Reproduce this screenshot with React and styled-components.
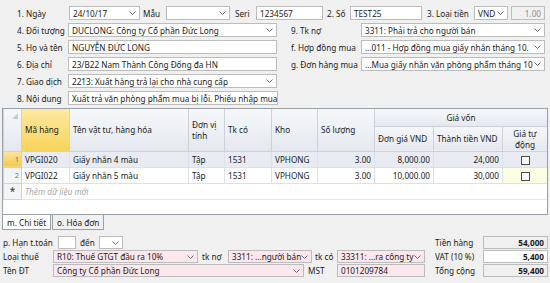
import React from 'react';
import styled, { createGlobalStyle, css } from 'styled-components';

const GlobalStyle = createGlobalStyle`
  html, body { margin: 0; padding: 0; background: #f0f0f0; }
  body {
    font-family: "Noto Sans", "Open Sans", sans-serif;
    font-size: 8.2px;
    color: #1b1b1b;
  }
  * { box-sizing: border-box; }
`;

const Page = styled.div`
  width: 550px;
  height: 283px;
  overflow: hidden;
  background: #f0f0f0;
`;

const Form = styled.div`
  display: flex;
  flex-direction: column;
  gap: 3px;
  padding: 6px 0 0 17px;
`;

const Row = styled.div`
  display: flex;
  align-items: center;
  height: ${p => p.$h || 14}px;
  white-space: nowrap;
`;

const Label = styled.span`
  width: ${p => p.$w}px;
  margin-left: ${p => p.$ml || 0}px;
  flex: none;
  overflow: hidden;
`;

const Field = styled.div`
  position: relative;
  width: ${p => p.$w}px;
  margin-left: ${p => p.$ml || 0}px;
  height: 100%;
  flex: none;
  display: flex;
  align-items: center;
  justify-content: ${p => (p.$right ? 'flex-end' : 'flex-start')};
  padding: ${p => (p.$combo ? '0 12px 0 3px' : '0 3px')};
  border: 1px solid #bcbcbc;
  background: ${p => p.$bg || '#fff'};
  color: ${p => (p.$muted ? '#8c8c8c' : '#1b1b1b')};
  font-weight: ${p => (p.$bold ? 700 : 400)};
  overflow: hidden;
  white-space: nowrap;
`;

const Chevron = styled.svg`
  position: absolute;
  right: 3px;
  top: 50%;
  margin-top: -2px;
  width: 7px;
  height: 4px;
`;

const Combo = ({ children, ...rest }) => (
  <Field $combo {...rest}>
    {children}
    <Chevron viewBox="0 0 7 4">
      <path d="M0.5 0.5 L3.5 3.5 L6.5 0.5" fill="none" stroke="#6b6b6b" strokeWidth="1" />
    </Chevron>
  </Field>
);

const GridBox = styled.div`
  margin: 3px 2px 0 2px;
  height: 107px;
  border: 1px solid #9aa0a8;
  background: #fff;
  overflow: hidden;
`;

const Table = styled.table`
  border-collapse: collapse;
  table-layout: fixed;
  width: 544px;
  white-space: nowrap;
`;

const Th = styled.th`
  font-weight: 400;
  text-align: ${p => p.$align || 'left'};
  vertical-align: middle;
  padding: 0 3px;
  border: 1px solid #cdd2da;
  border-top: none;
  white-space: ${p => (p.$wrap ? 'normal' : 'nowrap')};
  line-height: 11px;
  background: ${p =>
    p.$hot
      ? 'linear-gradient(#fde9a0, #f6d35a)'
      : 'linear-gradient(#f5f7fa, #e4e8ee)'};
  height: ${p => p.$h || 17}px;
  position: relative;
`;

const Corner = styled.div`
  position: absolute;
  right: 3px;
  top: 4px;
  width: 0;
  height: 0;
  border-left: 6px solid transparent;
  border-bottom: 6px solid #c8ccd2;
`;

const Tr = styled.tr`
  height: 16px;
  background: ${p => (p.$sel ? '#e8ebf1' : '#fff')};
`;

const Td = styled.td`
  padding: 0 3px;
  border: 1px solid #dde1e6;
  text-align: ${p => (p.$right ? 'right' : p.$center ? 'center' : 'left')};
  overflow: hidden;
  ${p => p.$bg && css`background: ${p.$bg};`}
`;

const RowHead = styled.td`
  border: 1px solid #cdd2da;
  text-align: ${p => (p.$star ? 'center' : 'right')};
  padding: 0 2px;
  color: ${p => (p.$star ? '#333' : '#6d7380')};
  font-size: ${p => (p.$star ? 10 : 7.5)}px;
  background: ${p => (p.$active ? 'linear-gradient(#fde49a, #f3c94e)' : '#f3f4f7')};
`;

const NewRowText = styled.td`
  color: #a7a7a7;
  font-style: italic;
  padding: 0 3px;
  border-bottom: 1px solid #e6e8ec;
`;

const Check = styled.span`
  display: inline-block;
  width: 9px;
  height: 9px;
  border: 1px solid #4c4c4c;
  background: #fff;
  vertical-align: middle;
`;

const Tabs = styled.div`
  display: flex;
  margin-left: 2px;
  height: 15px;
`;

const Tab = styled.div`
  padding: 0 4px;
  display: flex;
  align-items: center;
  border: 1px solid #9aa0a8;
  border-top: none;
  margin-right: 1px;
  background: ${p => (p.$active ? '#fff' : '#f0f0f0')};
`;

const Bottom = styled.div`
  display: flex;
  flex-direction: column;
  gap: 1px;
  padding: 6px 2px 0 3px;
`;

const Totals = styled.div`
  margin-left: auto;
  display: flex;
  align-items: center;
  height: 100%;
`;

const PINK = '#fce7ed';
const READONLY = '#f0f0f0';

const items = [
  { n: 1, code: 'VPGI020', name: 'Giấy nhắn 4 màu', unit: 'Tập', acc: '1531', wh: 'VPHONG', qty: '3.00', price: '8,000.00', total: '24,000' },
  { n: 2, code: 'VPGI022', name: 'Giấy nhắn 5 màu', unit: 'Tập', acc: '1531', wh: 'VPHONG', qty: '3.00', price: '10,000.00', total: '30,000' },
];

const Total = ({ label, value, bg }) => (
  <Totals>
    <Label $w={48}>{label}</Label>
    <Field $w={65} $right $bold $bg={bg}>{value}</Field>
  </Totals>
);

export default function App() {
  return (
    <Page>
      <GlobalStyle />
      <Form>
        <Row>
          <Label $w={52}>1. Ngày</Label>
          <Combo $w={71}>24/10/17</Combo>
          <Label $w={23} $ml={3}>Mẫu</Label>
          <Combo $w={64} />
          <Label $w={21} $ml={5}>Seri</Label>
          <Field $w={67}>1234567</Field>
          <Label $w={23} $ml={4}>2. Số</Label>
          <Field $w={72}>TEST25</Field>
          <Label $w={47} $ml={5}>3. Loại tiền</Label>
          <Combo $w={34}>VND</Combo>
          <Field $w={34} $ml={3} $right $muted $bg={READONLY}>1.00</Field>
        </Row>
        <Row>
          <Label $w={51}>4. Đối tượng</Label>
          <Combo $w={209}>DUCLONG: Công ty Cổ phần Đức Long</Combo>
          <Label $w={70} $ml={14}>9. Tk nợ</Label>
          <Combo $w={184}>3311: Phải trả cho người bán</Combo>
        </Row>
        <Row>
          <Label $w={51}>5. Họ và tên</Label>
          <Field $w={209}>NGUYỄN ĐỨC LONG</Field>
          <Label $w={70} $ml={14}>f. Hợp đồng mua</Label>
          <Combo $w={184}>...011 - Hợp đồng mua giấy nhắn tháng 10.</Combo>
        </Row>
        <Row>
          <Label $w={51}>6. Địa chỉ</Label>
          <Field $w={209}>23/B22 Nam Thành Công Đống đa HN</Field>
          <Label $w={70} $ml={14}>g. Đơn hàng mua</Label>
          <Combo $w={184}>...Mua giấy nhắn văn phòng phẩm tháng 10</Combo>
        </Row>
        <Row>
          <Label $w={51}>7. Giao dịch</Label>
          <Combo $w={209}>2213: Xuất hàng trả lại cho nhà cung cấp</Combo>
        </Row>
        <Row>
          <Label $w={51}>8. Nội dung</Label>
          <Field $w={210}>Xuất trả văn phòng phẩm mua bị lỗi. Phiếu nhập mua</Field>
        </Row>
      </Form>

      <GridBox>
        <Table>
          <colgroup>
            <col style={{ width: 18 }} />
            <col style={{ width: 48 }} />
            <col style={{ width: 119 }} />
            <col style={{ width: 36 }} />
            <col style={{ width: 47 }} />
            <col style={{ width: 46 }} />
            <col style={{ width: 57 }} />
            <col style={{ width: 59 }} />
            <col style={{ width: 69 }} />
            <col style={{ width: 45 }} />
          </colgroup>
          <thead>
            <tr>
              <Th rowSpan={2}><Corner /></Th>
              <Th rowSpan={2} $hot>Mã hàng</Th>
              <Th rowSpan={2}>Tên vật tư, hàng hóa</Th>
              <Th rowSpan={2} $wrap>Đơn vị tính</Th>
              <Th rowSpan={2}>Tk có</Th>
              <Th rowSpan={2}>Kho</Th>
              <Th rowSpan={2}>Số lượng</Th>
              <Th colSpan={3} $align="center">Giá vốn</Th>
            </tr>
            <tr>
              <Th $h={25}>Đơn giá VND</Th>
              <Th $h={25}>Thành tiền VND</Th>
              <Th $h={25} $align="center" $wrap>Giá tự động</Th>
            </tr>
          </thead>
          <tbody>
            {items.map((it, i) => (
              <Tr key={it.n} $sel={i === 0}>
                <RowHead $active={i === 0}>{it.n}</RowHead>
                <Td>{it.code}</Td>
                <Td>{it.name}</Td>
                <Td>{it.unit}</Td>
                <Td>{it.acc}</Td>
                <Td>{it.wh}</Td>
                <Td $right>{it.qty}</Td>
                <Td $right>{it.price}</Td>
                <Td $right>{it.total}</Td>
                <Td $center $bg={i === 1 ? '#fdfde3' : undefined}><Check /></Td>
              </Tr>
            ))}
            <Tr>
              <RowHead $star>*</RowHead>
              <NewRowText colSpan={9}>Thêm dữ liệu mới</NewRowText>
            </Tr>
          </tbody>
        </Table>
      </GridBox>

      <Tabs>
        <Tab $active>m. Chi tiết</Tab>
        <Tab>o. Hóa đơn</Tab>
      </Tabs>

      <Bottom>
        <Row $h={13}>
          <Label $w={55}>p. Hạn t.toán</Label>
          <Field $w={18} />
          <Label $w={19} $ml={4}>đến</Label>
          <Combo $w={24} />
          <Total label="Tiền hàng" value="54,000" bg={READONLY} />
        </Row>
        <Row $h={13}>
          <Label $w={50}>Loại thuế</Label>
          <Combo $w={145} $bg={PINK}>R10: Thuế GTGT đầu ra 10%</Combo>
          <Label $w={26} $ml={4}>tk nợ</Label>
          <Combo $w={84} $bg={PINK}>3311: ...người bán</Combo>
          <Label $w={22} $ml={3}>tk có</Label>
          <Combo $w={88} $bg={PINK}>33311: ...ra công ty</Combo>
          <Total label="VAT (10 %)" value="5,400" bg="#fff" />
        </Row>
        <Row $h={13}>
          <Label $w={50}>Tên ĐT</Label>
          <Combo $w={251} $bg={PINK}>Công ty Cổ phần Đức Long</Combo>
          <Label $w={29} $ml={4}>MST</Label>
          <Field $w={88} $bg={PINK}>0101209784</Field>
          <Total label="Tổng cộng" value="59,400" bg={READONLY} />
        </Row>
      </Bottom>
    </Page>
  );
}
